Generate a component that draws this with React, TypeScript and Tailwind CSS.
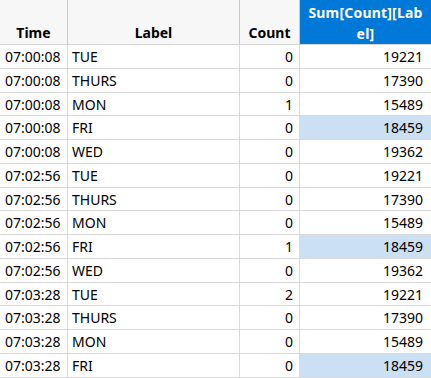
import React from "react";

const rows: [string, string, number, number][] = [
  ["07:00:08", "TUE", 0, 19221],
  ["07:00:08", "THURS", 0, 17390],
  ["07:00:08", "MON", 1, 15489],
  ["07:00:08", "FRI", 0, 18459],
  ["07:00:08", "WED", 0, 19362],
  ["07:02:56", "TUE", 0, 19221],
  ["07:02:56", "THURS", 0, 17390],
  ["07:02:56", "MON", 0, 15489],
  ["07:02:56", "FRI", 1, 18459],
  ["07:02:56", "WED", 0, 19362],
  ["07:03:28", "TUE", 2, 19221],
  ["07:03:28", "THURS", 0, 17390],
  ["07:03:28", "MON", 0, 15489],
  ["07:03:28", "FRI", 0, 18459],
];

export default function App() {
  return (
    <div
      className="w-[431px] h-[378px] overflow-hidden bg-white text-[14px] text-black"
      style={{ fontFamily: '"Noto Sans", "Open Sans", sans-serif' }}
    >
      <div className="flex h-[45px] border-b border-[#d4d4d4] bg-[#f7f7f7] font-bold leading-[21px]">
        <div className="w-[68px] shrink-0 border-r border-[#c8c8c8] flex items-end justify-center pb-[1px]">
          Time
        </div>
        <div className="w-[172px] shrink-0 border-r border-[#c8c8c8] flex items-end justify-center pb-[1px]">
          Label
        </div>
        <div className="w-[60px] shrink-0 border-r border-[#c8c8c8] flex items-end justify-center pb-[1px]">
          Count
        </div>
        <div className="flex-1 bg-[#0078d7] text-white flex items-end justify-center text-center pb-0 px-[4px] leading-[21px] tracking-[0.2px]">
          Sum[Count][Lab el]
        </div>
      </div>
      {rows.map(([t, l, c, s], i) => (
        <div key={i} className="flex h-[23.75px] border-b border-[#d9d9d9] leading-[23px]">
          <div className="w-[68px] shrink-0 border-r border-[#d9d9d9] pl-[5px] whitespace-nowrap">{t}</div>
          <div className="w-[172px] shrink-0 border-r border-[#d9d9d9] pl-[4px]">{l}</div>
          <div className="w-[60px] shrink-0 border-r border-[#d9d9d9] pr-[6px] text-right">{c}</div>
          <div className={`flex-1 pr-[8px] text-right ${l === "FRI" ? "bg-[#cce0f4]" : ""}`}>{s}</div>
        </div>
      ))}
    </div>
  );
}
